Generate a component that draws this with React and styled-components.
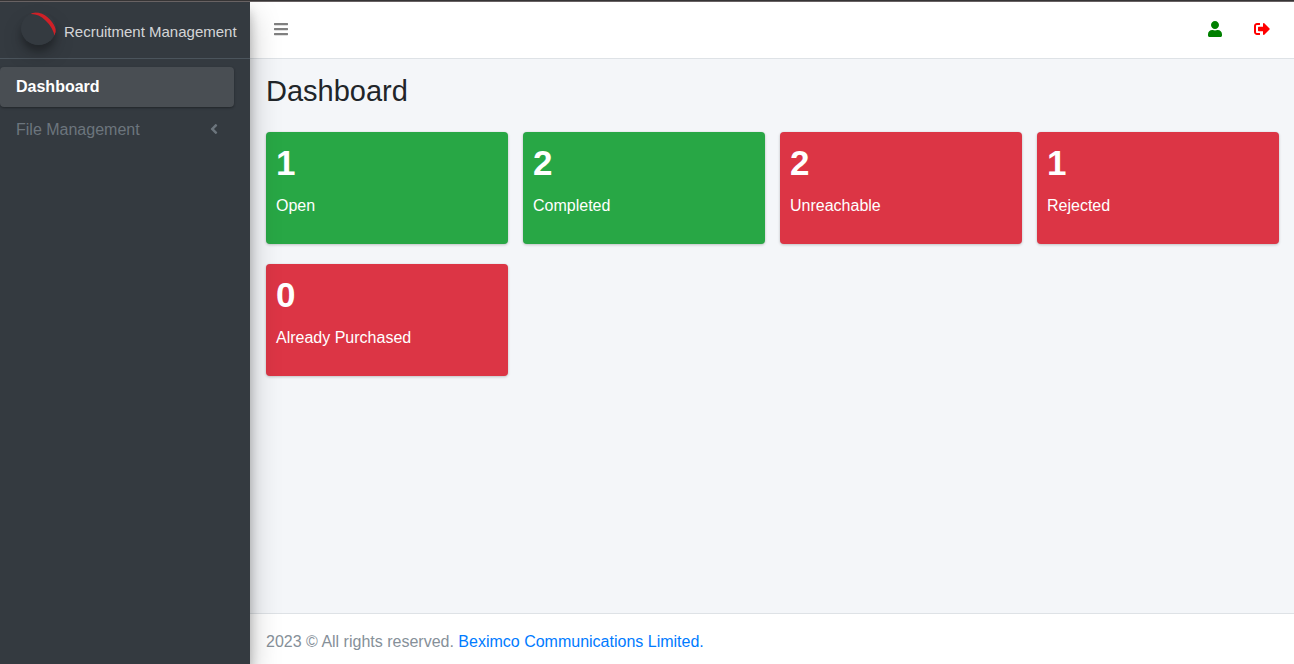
import React from 'react';
import styled, { createGlobalStyle } from 'styled-components';
import { FaBars, FaUser, FaSignOutAlt, FaAngleLeft } from 'react-icons/fa';

const GlobalStyle = createGlobalStyle`
  *, *::before, *::after { box-sizing: border-box; }
  body {
    margin: 0;
    font: 16px/24px "Liberation Sans", Arial, sans-serif;
    color: #212529;
    background: #f4f6f9;
  }
`;

const Page = styled.div`
  display: flex;
  flex-direction: column;
  min-height: 100vh;
`;

const TopStrip = styled.div`
  height: 2px;
  background: #363435;
  border-bottom: 1px solid #686263;
`;

const Shell = styled.div`
  flex: 1;
  display: flex;
  overflow: hidden;
`;

const Sidebar = styled.aside`
  position: relative;
  z-index: 1;
  flex: 0 0 250px;
  background: #343a40;
  box-shadow: 0 14px 28px rgba(0, 0, 0, 0.25), 0 10px 10px rgba(0, 0, 0, 0.22);
`;

const Brand = styled.a`
  display: flex;
  align-items: center;
  gap: 8px;
  height: 57px;
  padding: 0 12px 0 21px;
  border-bottom: 1px solid #4b545c;
  color: rgba(255, 255, 255, 0.8);
  font-size: 15px;
  text-decoration: none;
  white-space: nowrap;
`;

const BrandText = styled.span`
  padding-top: 4px;
`;

const LogoMark = styled.svg`
  flex: none;
  width: 35px;
  height: 33px;
  margin-bottom: 3px;
  border-radius: 50%;
  box-shadow: 0 10px 20px rgba(0, 0, 0, 0.19), 0 6px 6px rgba(0, 0, 0, 0.23);
`;

const Menu = styled.nav`
  display: flex;
  flex-direction: column;
  gap: 3px;
  padding: 8px 16px 0 0;
`;

const MenuLink = styled.a`
  display: flex;
  align-items: center;
  justify-content: space-between;
  height: 40px;
  padding: 0 12px 0 16px;
  border-radius: 4px;
  text-decoration: none;
  color: ${({ $active }) => ($active ? '#fff' : '#6c757d')};
  font-weight: ${({ $active }) => ($active ? 700 : 400)};
  background: ${({ $active }) => ($active ? '#494e53' : 'transparent')};
  box-shadow: ${({ $active }) =>
    $active ? '0 1px 3px rgba(0, 0, 0, 0.12), 0 1px 2px rgba(0, 0, 0, 0.24)' : 'none'};

  svg {
    margin-bottom: 2px;
  }
`;

const Main = styled.div`
  flex: 1;
  min-width: 0;
  display: flex;
  flex-direction: column;
`;

const Navbar = styled.header`
  display: flex;
  align-items: center;
  justify-content: space-between;
  height: 57px;
  padding: 0 8px 2px;
  background: #fff;
  border-bottom: 1px solid #dee2e6;
`;

const Actions = styled.div`
  display: flex;
`;

const IconButton = styled.button`
  display: flex;
  align-items: center;
  height: 40px;
  padding: 0 16px;
  border: 0;
  background: none;
  color: ${({ $color }) => $color};
  font-size: 16px;
  cursor: pointer;

  svg {
    width: ${({ $width }) => $width}px;
  }
`;

const Content = styled.main`
  flex: 1;
  padding: 15px 15px 20px 16px;
`;

const Title = styled.h1`
  margin: 0 0 23px;
  font-size: 29px;
  line-height: 35px;
  font-weight: 400;
`;

const Cards = styled.div`
  display: grid;
  grid-template-columns: repeat(4, 1fr);
  gap: 20px 15px;
`;

const Card = styled.section`
  min-height: 112px;
  padding: 10px;
  border-radius: 4px;
  color: #fff;
  background: ${({ $tone }) => ($tone === 'success' ? '#28a745' : '#dc3545')};
  box-shadow: 0 0 1px rgba(0, 0, 0, 0.125), 0 1px 3px rgba(0, 0, 0, 0.2);
`;

const Count = styled.h3`
  margin: 0 0 10px;
  font-size: 35px;
  line-height: 42px;
  font-weight: 700;
`;

const Label = styled.p`
  margin: 0;
`;

const Footer = styled.footer`
  padding: 16px 16px 10px;
  border-top: 1px solid #dee2e6;
  background: #fff;
  color: #869099;
`;

const FooterLink = styled.a`
  color: #007bff;
  text-decoration: none;
`;

const stats = [
  { label: 'Open', count: 1, tone: 'success' },
  { label: 'Completed', count: 2, tone: 'success' },
  { label: 'Unreachable', count: 2, tone: 'danger' },
  { label: 'Rejected', count: 1, tone: 'danger' },
  { label: 'Already Purchased', count: 0, tone: 'danger' },
];

export default function App() {
  return (
    <>
      <GlobalStyle />
      <Page>
        <TopStrip />
        <Shell>
          <Sidebar>
            <Brand href="#">
              <LogoMark viewBox="0 0 35 33" aria-hidden="true">
                <ellipse cx="17.5" cy="16.5" rx="17.5" ry="16.5" fill="#343a40" />
                <path
                  d="M8.5 2.2C11.5 0 16 -.2 21 1.8C29 5.2 35 14 35 20C35 21.6 34.5 23 33.6 24C32.6 18.5 29.5 13 24.5 8.4C19.5 3.8 14 1.6 8.5 2.2Z"
                  fill="#cf2027"
                />
              </LogoMark>
              <BrandText>Recruitment Management</BrandText>
            </Brand>
            <Menu>
              <MenuLink href="#" $active>Dashboard</MenuLink>
              <MenuLink href="#">
                File Management
                <FaAngleLeft size={16} />
              </MenuLink>
            </Menu>
          </Sidebar>
          <Main>
            <Navbar>
              <IconButton type="button" aria-label="Toggle menu" $color="#808080" $width={14}>
                <FaBars />
              </IconButton>
              <Actions>
                <IconButton type="button" aria-label="Profile" $color="green" $width={14}>
                  <FaUser />
                </IconButton>
                <IconButton type="button" aria-label="Sign out" $color="red" $width={16}>
                  <FaSignOutAlt />
                </IconButton>
              </Actions>
            </Navbar>
            <Content>
              <Title>Dashboard</Title>
              <Cards>
                {stats.map(({ label, count, tone }) => (
                  <Card key={label} $tone={tone}>
                    <Count>{count}</Count>
                    <Label>{label}</Label>
                  </Card>
                ))}
              </Cards>
            </Content>
            <Footer>
              2023 © All rights reserved. <FooterLink href="#">Beximco Communications Limited.</FooterLink>
            </Footer>
          </Main>
        </Shell>
      </Page>
    </>
  );
}
